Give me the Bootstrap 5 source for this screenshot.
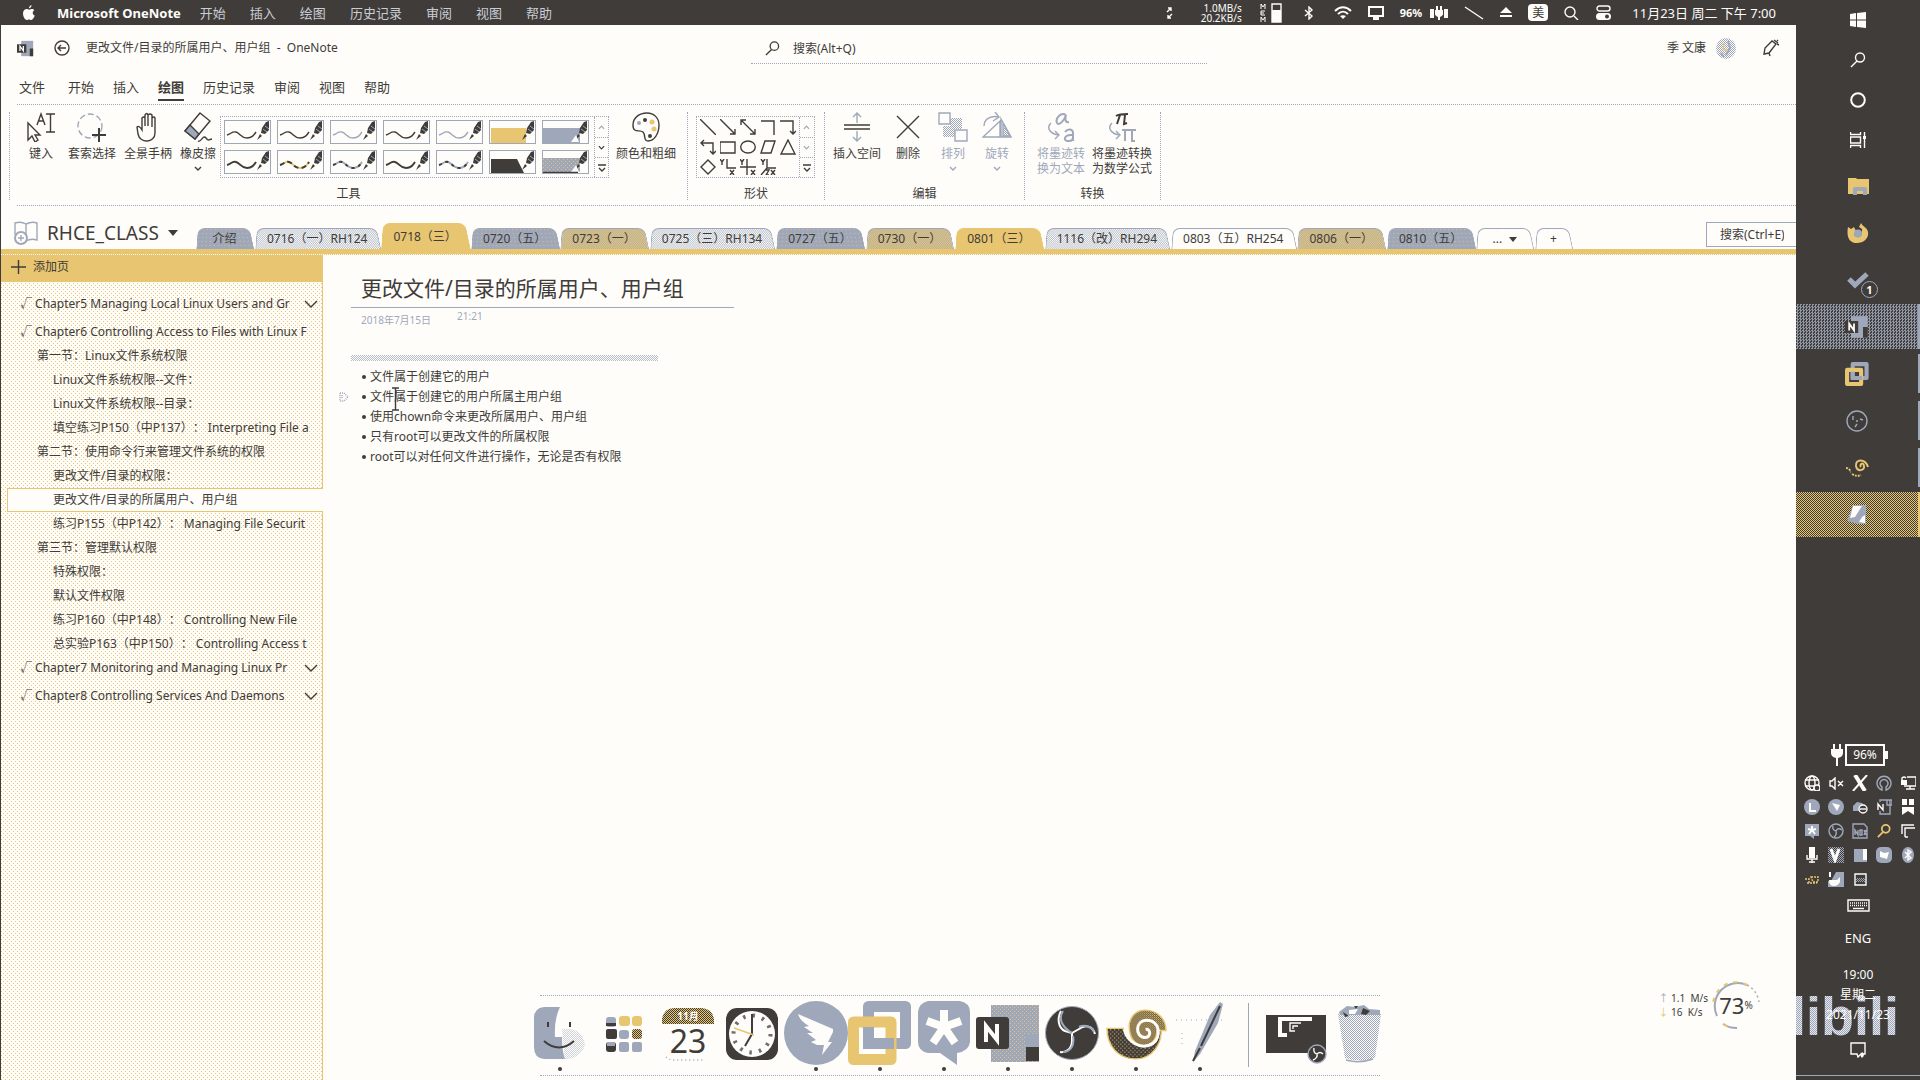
<!DOCTYPE html>
<html lang="zh-CN">
<head>
<meta charset="utf-8">
<meta name="viewport" content="width=device-width, initial-scale=1">
<title>更改文件/目录的所属用户、用户组 - OneNote</title>
<link href="https://cdn.jsdelivr.net/npm/bootstrap@5.3.0/dist/css/bootstrap.min.css" rel="stylesheet">
<style>
:root{--ink:#403c39;--fog:#9fa8ba;--gold:#e8c570;--paper:#fefdfa;
 --checker:repeating-conic-gradient(var(--fog) 0 25%,var(--paper) 0 50%) 0 0/2px 2px;
 --dots4:conic-gradient(from 270deg at 1px 1px,var(--gold) 25%,transparent 0)}
body{font:12px/16px "Noto Sans","Noto Sans CJK SC",sans-serif;text-spacing-trim:space-all;color:var(--ink);background:var(--paper);overflow:hidden}
a{color:inherit;text-decoration:none}
button{background:none;border:0;padding:0;color:inherit;font:inherit}
svg{display:block;flex:none;fill:none;stroke:currentColor;stroke-width:1.4}
.fill{fill:currentColor;stroke:none}
.fog{color:var(--fog)}
.solid-fog{fill:var(--fog);stroke:none}.solid-gold{fill:var(--gold);stroke:none}.solid-ink{fill:var(--ink);stroke:none}.solid-paper{fill:var(--paper);stroke:none}
.window{border-left:1px solid var(--ink)}
.sysbar{height:25px;background:var(--ink);color:var(--paper);padding:0 20px 0 22px;font-size:13px}
.sysbar .menus{margin-left:22px}
.sysbar .menus a{margin-right:24px}
.sysbar .menus a+a{color:#c9cdd5}
.sysbar .menus a:first-child{margin-right:19px}
.rate{font-size:10px;line-height:10px;text-align:right;width:44px}
.netpct{font-size:11px}
.ime{background:var(--paper);color:var(--ink);font-size:12px;line-height:17px}
.titlebar{height:48px;padding:0 16px 2px}
.findbox{width:456px;border-bottom:1px dotted var(--fog);padding-left:14px;height:30px;left:750px;top:9px}
.findbox input{margin-left:13px}
.findbox input,.pagefind input{border:0;background:none;outline:0;color:inherit;font:inherit;padding:0}
input::placeholder{color:var(--ink);opacity:1}
.menutabs{height:31px;padding:0 18px;gap:19px;font-size:13px}
.menutabs a{height:28px;line-height:28px;border-bottom:2px solid transparent}
.menutabs a.on{font-weight:700;border-color:var(--ink)}
.ribbon{height:100px;margin-left:8px}
.rule-dots{border-top:1px dotted var(--fog);margin-left:16px;height:0}
.grp{border-right:1px dotted var(--fog);margin:7px 0;height:88px}
.grp.first{border-left:1px dotted var(--fog)}
.grp .tools{height:74px;display:flex}
.grp .cap{text-align:center;line-height:15px}
.tool{display:flex;flex-direction:column;align-items:center;line-height:15px;white-space:nowrap}
.tool svg{margin-bottom:4px}
.tool .drop{margin-top:5px}
.w44{width:44px}.w46{width:46px}.w56{width:56px}.w66{width:66px}
.gallery{border:1px dotted var(--fog);height:62px;margin-top:4px}
.pens{display:grid;grid-template-columns:repeat(7,47px);gap:6px;padding:3px 0 0 3px;width:373px;align-content:start}
.pens button{border:1px solid var(--fog);height:24px}
.thick{stroke-width:2}
.flip{transform:rotate(180deg)}
.strip{width:14px;border-left:1px dotted var(--fog);font-size:9px}
.strip button{height:20px;display:flex;align-items:center;justify-content:center}
.strip button+button{border-top:1px dotted var(--fog)}
.shapes{display:grid;grid-template-columns:repeat(5,20px);grid-auto-rows:20px;padding-left:1px;width:102px}
.shapes button{display:flex;align-items:center;justify-content:center}
.bookrow{height:43px;padding-left:13px}
.book{width:181px}
.bookname{font-size:19px;line-height:24px;margin:0 9px 0 8px}
.sect{position:relative;isolation:isolate;height:21px;line-height:22px;padding:0 13px;white-space:nowrap;text-align:center;min-width:59px}
.sect::before,.sect::after{content:"";position:absolute;z-index:-1;top:0;bottom:0;background:var(--bg);border-top:1px solid var(--fog)}
.sect::before{left:2px;right:50%;border-left:1px solid var(--fog);border-radius:7px 0 0 0;transform:skewX(-4deg)}
.sect::after{left:40%;right:2px;border-right:1px solid var(--fog);border-radius:0 7px 0 0;transform:skewX(12deg)}
.sect{--bg:var(--paper)}
.s-blue{--bg:var(--dots4) 0 0/4px 4px,#9fa8ba}
.s-check{--bg:var(--checker)}
.s-mix{--bg:repeating-conic-gradient(var(--fog) 0 25%,var(--gold) 0 50%) 0 0/2px 2px}
.s-gold{--bg:var(--gold)}
.s-gold::before,.s-gold::after{border-color:var(--gold)}
.sect.on{height:26px;line-height:28px}
.sect.plus{min-width:38px}
.pagefind{width:90px;height:25px;border:1px solid var(--fog);border-right:0;padding-left:13px;margin-bottom:2px}
.goldline{height:6px;background:var(--gold);border-bottom:1px dotted var(--paper)}
.pages{width:322px;background:var(--dots4) 0 0/4px 4px,var(--dots4) 2px 2px/4px 4px,var(--paper);border-right:1px solid var(--gold)}
.addpage{height:27px;background:var(--gold);padding:0 0 4px 10px;gap:6px;text-align:left;display:flex;align-items:center}
.plist{padding-top:10px}
.plist a{height:24px;line-height:24px;white-space:nowrap;overflow:hidden;padding-right:6px}
.plist .l1{padding:0 4px 0 19px}.plist .gap4{margin-bottom:4px}
.plist .l2{padding-left:36px}.plist .l3{padding-left:52px}
.plist .l1 .nm{width:278px;overflow:hidden}
.plist .on{margin-left:6px;padding-left:45px;border:1px solid var(--gold);border-right:0;background:var(--paper);line-height:22px;margin-right:-1px}
.sheet{padding:18px 0 0 28px}
.sheet h1{font-size:21px;line-height:30px;margin:0;padding:0 10px 4px;border-bottom:1px solid var(--fog);width:383px;font-weight:400;white-space:nowrap}
.stamp{font-size:10px;color:var(--fog);padding:0 10px;gap:26px}
.note{width:307px;margin-top:27px}
.handle{height:6px;background:var(--checker);opacity:.75}
.note ul{padding:6px 0 0 19px;margin:0;list-style:none;white-space:nowrap}
.note li{line-height:20px;position:relative}
.note li::before{content:"";position:absolute;left:-8px;top:8px;width:4px;height:4px;border-radius:50%;background:var(--ink)}
.caret{position:absolute;left:22px;top:0}
.gripper{position:absolute;left:-31px;top:5px}
.dock{position:absolute;left:50%;transform:translateX(-50%);bottom:4px;width:864px;height:81px}
.dock .edge{position:absolute;left:12px;right:12px;border-top:1px dotted var(--fog)}
.dock button{width:64px;height:81px;padding-bottom:3px}
.dock .run{padding-bottom:0}
.dock .run::after{content:"";display:block;width:4px;height:4px;border-radius:50%;background:var(--ink);margin:2px auto 0}
.dock .bar{width:1px;height:64px;background:var(--fog);margin:8px 15px 0 16px}
.cal{font-size:10px;font-weight:700;fill:var(--paper);stroke:none}
.calday{font-size:32px;fill:var(--ink);stroke:none}
.netbox{position:absolute;right:160px;bottom:51px;gap:4px;color:var(--ink);font-size:10px;line-height:14px}
.ring{width:48px;height:48px}
.netbox .big{font-size:22px}
.goldtext{color:var(--gold)}
.side{width:124px;background:var(--ink);color:var(--paper);position:relative}
.side .app{display:flex;align-items:center;justify-content:center;height:40px;width:100%;flex:none;position:relative}
.side .tall{height:47px}
.side .firsttall{margin-top:2px}
.side .live{border-right:2px solid var(--fog);height:39px;margin:4px 0}
.side .cur{height:45px;margin:1px 0;background:repeating-conic-gradient(#8f97a6 0 25%,var(--ink) 0 50%) 0 0/3px 3px;border-right:2px solid var(--fog)}
.side .warn{height:45px;margin:1px 0;background:repeating-conic-gradient(var(--gold) 0 25%,var(--ink) 0 50%) 0 0/2px 2px;border-right:2px solid var(--gold)}
.pip{position:absolute;left:65px;top:25px;width:17px;height:17px;border:1px solid var(--fog);border-radius:50%;background:var(--ink);font:700 11px/15px "Noto Sans",sans-serif;text-align:center}
.power{gap:2px}
.cell{border:2px solid var(--paper);width:40px;height:22px;line-height:18px;text-align:center;position:relative}
.cell::after{content:"";position:absolute;right:-5px;top:5px;width:3px;height:8px;background:var(--paper)}
.tray{display:grid;grid-template-columns:repeat(5,24px);grid-auto-rows:24px;margin:5px 0 0 4px}
.tray button{display:flex;align-items:center;justify-content:center}
.keys{height:28px}
.alerts{height:50px}
.baseline{height:1px;background:var(--fog);margin-bottom:4px}
.lang{height:38px;line-height:38px;font-size:13px}
.when{line-height:20px;font-size:12px;text-align:center;position:relative}
.wmark{position:absolute;left:-5px;bottom:34px;font:700 54px/60px "Liberation Sans",sans-serif;color:transparent;background:repeating-conic-gradient(var(--fog) 0 25%,#e5e7ea 0 50%) 0 0/2px 2px;-webkit-background-clip:text;background-clip:text;white-space:nowrap}
.clipside{position:absolute;inset:0;overflow:hidden;pointer-events:none}
</style>
</head>
<body class="d-flex vh-100">
<svg width="0" height="0" class="position-absolute">
 <defs>
 <pattern id="chk" width="2" height="2" patternUnits="userSpaceOnUse"><path fill="#9fa8ba" stroke="none" d="M0 0h1v1H0zM1 1h1v1H1z"/></pattern>
 <pattern id="chkg" width="2" height="2" patternUnits="userSpaceOnUse"><path fill="#e8c570" stroke="none" d="M0 0h2v2H0z"/><path fill="#403c39" stroke="none" d="M0 0h1v1H0zM1 1h1v1H1z"/></pattern>
 <pattern id="speck" width="4" height="4" patternUnits="userSpaceOnUse"><path fill="#9fa8ba" stroke="none" d="M0 0h4v4H0z"/><path fill="#e8c570" stroke="none" d="M0 0h1v1H0zM2 2h1v1H2z"/></pattern>
 <pattern id="inkspeck" width="4" height="4" patternUnits="userSpaceOnUse"><path fill="#403c39" stroke="none" d="M0 0h4v4H0z"/><path fill="#e8c570" stroke="none" d="M0 0h1v1H0zM2 2h1v1H2z"/></pattern>
 </defs>
 <symbol id="nib" viewBox="0 0 45 22"><path fill="#403c39" stroke="none" d="M44 0v9l-4 4-4-1 1-5 4-6zM35 13l2 2-5 4z"/><path stroke="#9fa8ba" stroke-width="1" d="M38 8l4 3M40 5l4 3"/></symbol>
 <symbol id="wave" viewBox="0 0 45 22"><path d="M2 14c4-1 5-4 9-3s5 6 11 6c5 0 7-3 9-6"/></symbol>
 <symbol id="one" viewBox="0 0 20 20"><path class="solid-fog" d="M5 1h14v18H5z"/><path class="solid-ink" d="M15 10h4v9h-4zM0 5h11v10H0z"/><path stroke="#fefdfa" stroke-width="1.5" d="M3.500 13V7.200l4 5.600V7"/></symbol>
 <symbol id="vm" viewBox="0 0 64 64"><path stroke="#9fa8ba" stroke-width="11" stroke-linejoin="round" d="M20.500 5.500h37v37h-37z"/><path stroke="#e8c570" stroke-width="11" stroke-linejoin="round" d="M5.500 21h37.500v37.500H5.500z"/><path stroke="#9fa8ba" stroke-width="11" d="M20.500 26v16.500H46"/></symbol>
 <symbol id="obs" viewBox="0 0 54 54"><circle cx="27" cy="27" r="26.500" fill="#403c39" stroke="#9fa8ba" stroke-width="1"/><path stroke="#fefdfa" stroke-width="2" d="M16 5c-4 7-3 17 4 20l7 2M27 27l7-4c6-5 14-3 16 5M27 27v8c0 7-5 12-12 11"/><path stroke="#9fa8ba" stroke-width="2" d="M18 5c-5 8-1 16 9 22M34 21c6-3 13 0 15 5M28 30c2 10-3 16-10 16"/></symbol>
 <symbol id="snail" viewBox="0 0 60 50"><path fill="url(#inkspeck)" stroke="#e8c570" d="M1 19h16c3 11 18 19 29 11l8-12c2 15-8 31-25 31C12 49 1 36 1 19z"/><path fill="url(#chkg)" stroke="#e8c570" d="M23 14C25 5 32 1 38 1c12 0 21 8 21 20H50c0 9-6 15-13 15-9 0-15-9-14-22z"/><path stroke="#fefdfa" stroke-width="3" d="M18 20c3 12 16 21 28 14 9-7 7-23-6-23-11 0-12 16-2 17 7 0 6-9 1-8"/></symbol>
 <symbol id="chev" viewBox="0 0 8 5"><path d="M1 1l3 3 3-3"/></symbol>
 <symbol id="lens" viewBox="0 0 16 16"><circle cx="10" cy="5.500" r="4.500"/><path d="M7 9l-6 6"/></symbol>
</svg>

<main class="window flex-grow-1 d-flex flex-column position-relative overflow-hidden">
 <header class="sysbar d-flex align-items-center">
  <svg class="fill" width="12" height="15" viewBox="0 0 12 15"><path d="M8.500 0C8.600 1.800 7.400 3.200 6 3.300 5.900 1.700 7.200.3 8.500 0zM11.300 5.200C9 6.600 9.400 9.700 11.800 10.600 11 13 9.600 15 8.300 15c-1 0-1.300-.6-2.300-.6S4.600 15 3.700 15C1.900 15 0 11.500 0 8.600 0 5.500 1.800 4 3.600 4c1.100 0 1.800.7 2.600.7S7.800 4 9 4c.9 0 1.800.5 2.300 1.200z"/></svg>
  <nav class="menus d-flex"><a href="#" class="fw-bold">Microsoft OneNote</a><a href="#">开始</a><a href="#">插入</a><a href="#">绘图</a><a href="#">历史记录</a><a href="#">审阅</a><a href="#">视图</a><a href="#">帮助</a></nav>
  <div class="ms-auto d-flex align-items-center">
   <svg width="8" height="14" viewBox="0 0 8 14" stroke-width="1"><path d="M1 6l4-4M2 2h3v3M6 8l-4 4M5 12H2V9"/></svg>
   <div class="rate ms-4">1.0MB/s<br>20.2KB/s</div>
   <svg class="ms-3" width="26" height="20" viewBox="0 0 26 20"><path stroke-width="1" d="M3 6V1l2 3 2-3v5M7 8H3v4h4M3 10h3M3 19v-5l2 3 2-3v5"/><path d="M14 1h9v18h-9z"/><path class="fill" d="M14 7h9v12h-9z"/></svg>
   <svg class="ms-3" width="18" height="14" viewBox="0 0 18 14"><path d="M5 4l7 6-3 3V1l3 3-7 6"/></svg>
   <svg class="ms-3" width="18" height="13" viewBox="0 0 18 13" stroke-width="2"><path stroke-width="2" d="M1 5c5-5 11-5 16 0M4 8c3-3 7-3 10 0"/><path class="fill" d="M6 10c2-1 4-1 6 0l-3 3z"/></svg>
   <svg class="ms-3" width="16" height="14" viewBox="0 0 16 14"><path stroke-width="2" d="M1 1h14v9H1z"/><path class="fill" d="M5 11h6v3H5z"/></svg>
   <b class="netpct ms-3">96%</b>
   <svg class="ms-2" width="18" height="14" viewBox="0 0 18 14"><path class="fill" d="M0 3h4v9H0zM14 3h4v9h-4zM5 4h8v4c0 2-3 3-3 3v3H8v-3S5 10 5 8zM6 0h2v4H6zM10 0h2v4h-2z"/></svg>
   <svg class="ms-3" width="20" height="14" viewBox="0 0 20 14"><path d="M1 1l18 12"/></svg>
   <svg class="fill ms-3" width="12" height="11" viewBox="0 0 12 11"><path d="M6 0l6 6H0zM0 8h12v2H0z"/></svg>
   <span class="ime px-1 ms-3 rounded-1">美</span>
   <svg class="ms-3" width="16" height="14" viewBox="0 0 16 14"><circle cx="6" cy="6" r="5"/><path d="M10 10l4 4"/></svg>
   <svg class="ms-3 me-3" width="16" height="15" viewBox="0 0 16 15"><rect x="1" y="1" width="13" height="5" rx="2.500"/><rect class="fill" y="8" width="15" height="7" rx="3.500"/><circle class="solid-ink" cx="11" cy="11.500" r="2"/></svg>
   <span class="ps-1">11月23日 周二 下午 7:00</span>
  </div>
 </header>

 <div class="titlebar d-flex align-items-center position-relative">
  <svg width="17" height="17"><use href="#one"/></svg>
  <button class="ms-3 ps-1 me-3" aria-label="返回"><svg width="16" height="16" viewBox="0 0 16 16"><circle cx="8" cy="8" r="7"/><path d="M12 8H4M7 5L4 8l3 3"/></svg></button>
  <span>更改文件/目录的所属用户、用户组 &nbsp;-&nbsp; OneNote</span>
  <label class="findbox position-absolute d-flex align-items-center"><svg width="15" height="15"><use href="#lens"/></svg><input class="flex-grow-1" type="search" placeholder="搜索(Alt+Q)" aria-label="搜索"></label>
  <span class="ms-auto">季 文康</span>
  <svg class="ms-2 me-4" width="24" height="21" viewBox="0 0 20 21"><ellipse cx="10" cy="10.500" rx="10" ry="10.500" fill="url(#chk)" stroke="none"/><path stroke="#e8c570" d="M8 5l-1 6 4 2"/><path stroke="#9fa8ba" stroke-width="2" d="M12 3l2 7-4 7M5 15l3 4"/></svg>
  <button aria-label="墨迹"><svg width="18" height="18" viewBox="0 0 18 18"><path d="M2 15l1-6 7-7 4 3-7 9zM2 15l5-1 1 3M12 1l4 3M15 1l1 1M17 6l-2-1"/></svg></button>
 </div>

 <nav class="menutabs d-flex"><a href="#" class="me-1">文件</a><a href="#">开始</a><a href="#">插入</a><a href="#" class="on">绘图</a><a href="#">历史记录</a><a href="#">审阅</a><a href="#">视图</a><a href="#">帮助</a></nav>
 <div class="rule-dots"></div>

 <section class="ribbon d-flex">
  <div class="grp first" style="width:679px">
   <div class="tools ps-2">
    <button class="tool w46"><svg width="30" height="30" viewBox="0 0 30 30"><path d="M2 11v17l4-4 3 6 3-2-3-5h5zM11 13l4-11 4 11M12 9h6M20 2h9M24.500 2v18M20 20h9"/></svg>键入</button>
    <button class="tool w56"><svg width="30" height="30" viewBox="0 0 30 30"><circle cx="13" cy="14" r="12" stroke="#9fa8ba" stroke-dasharray="6 3"/><path stroke-width="2" d="M15 23h14M22 16v14"/></svg>套索选择</button>
    <button class="tool w56"><svg width="24" height="30" viewBox="0 0 24 30"><path d="M6 18V6q2-2 3 0v8V3q2-3 3 0v11V3q2-2 4 0v12V6q2-2 3 0v15c0 10-15 11-17 1L1 15q2-2 5 3z"/></svg>全景手柄</button>
    <button class="tool w44"><svg width="30" height="30" viewBox="0 0 30 30"><path d="M17 1l10 8L12 27 2 19z"/><path fill="#9fa8ba" d="M7 13l9 9-4 5-10-8z"/><path d="M15 29c3 2 5-7 8-3s3 1 6 1"/></svg>橡皮擦<svg class="drop" width="8" height="5"><use href="#chev"/></svg></button>
    <div class="gallery d-flex">
     <div class="pens">
      <button aria-label="笔 1"><svg width="45" height="22"><use href="#wave"/><use href="#nib"/></svg></button>
      <button aria-label="笔 2"><svg width="45" height="22"><use href="#wave"/><use href="#nib"/></svg></button>
      <button aria-label="笔 3"><svg width="45" height="22"><use href="#wave" class="fog"/><use href="#nib"/></svg></button>
      <button aria-label="笔 4"><svg width="45" height="22"><use href="#wave"/><use href="#nib"/></svg></button>
      <button aria-label="笔 5"><svg width="45" height="22"><use href="#wave" class="fog"/><use href="#nib"/></svg></button>
      <button aria-label="荧光笔 1"><svg width="45" height="22"><path class="solid-gold" d="M1 7h35v15H1z"/><use href="#nib"/></svg></button>
      <button aria-label="荧光笔 2"><svg width="45" height="22"><path class="solid-fog" d="M0 7h37v15H0z"/><use href="#nib"/><path class="solid-paper" d="M28 21l5-7 3 7z"/></svg></button>
      <button aria-label="笔 6"><svg class="thick" width="45" height="22"><use href="#wave"/><use href="#nib"/></svg></button>
      <button aria-label="笔 7"><svg class="thick" width="45" height="22"><use href="#wave" class="goldtext"/><use href="#wave" stroke-dasharray="5 3"/><use href="#nib"/></svg></button>
      <button aria-label="笔 8"><svg class="thick" width="45" height="22"><use href="#wave" class="fog"/><use href="#wave" stroke-dasharray="3 4"/><use href="#nib"/></svg></button>
      <button aria-label="笔 9"><svg class="thick" width="45" height="22"><use href="#wave"/><use href="#nib"/></svg></button>
      <button aria-label="笔 10"><svg class="thick" width="45" height="22"><use href="#wave" class="fog"/><use href="#wave" stroke-dasharray="3 4"/><use href="#nib"/></svg></button>
      <button aria-label="荧光笔 3"><svg width="45" height="22"><path class="solid-ink" d="M1 8h26l7 14H1z"/><use href="#nib"/></svg></button>
      <button aria-label="荧光笔 4"><svg width="45" height="22"><path fill="url(#speck)" stroke="none" d="M0 7h37v14H0z"/><use href="#nib"/><path class="solid-paper" d="M28 21l5-7 3 7z"/><path d="M0 21.500h35"/></svg></button>
     </div>
     <div class="strip d-flex flex-column"><button class="fog" aria-label="上"><svg class="flip" width="7" height="5"><use href="#chev"/></svg></button><button aria-label="下"><svg width="7" height="5"><use href="#chev"/></svg></button><button aria-label="更多"><svg width="8" height="8" viewBox="0 0 8 8"><path d="M0 1h8M1 4l3 3 3-3"/></svg></button></div>
    </div>
    <button class="tool ms-1 w66"><svg width="30" height="30" viewBox="0 0 30 30"><path d="M2 13C2 6 8 1 16 1c7 0 12 5 12 12 0 9-5 16-11 16-5 0-2-6-5-9s-10 2-10-7z"/><circle class="solid-fog" cx="8" cy="11" r="2"/><circle class="solid-ink" cx="14" cy="8" r="2"/><circle class="solid-gold" cx="21" cy="10" r="2.500"/><circle class="solid-gold" cx="23" cy="17" r="2.500"/><circle class="solid-ink" cx="19" cy="24" r="2"/></svg>颜色和粗细</button>
   </div>
   <div class="cap">工具</div>
  </div>
  <div class="grp" style="width:137px">
   <div class="tools ps-2">
    <div class="gallery d-flex" style="width:119px">
     <div class="shapes">
      <button aria-label="直线"><svg width="16" height="16" viewBox="0 0 16 16"><path d="M0 0l16 16"/></svg></button>
      <button aria-label="箭头"><svg width="16" height="16" viewBox="0 0 16 16"><path d="M0 0l15 15M15 10v5h-5"/></svg></button>
      <button aria-label="双箭头"><svg width="16" height="16" viewBox="0 0 16 16"><path d="M1 1l14 14M15 10v5h-5M1 6V1h5"/></svg></button>
      <button aria-label="折线"><svg width="16" height="16" viewBox="0 0 16 16"><path d="M1 2h13v14"/></svg></button>
      <button aria-label="折线箭头"><svg width="16" height="16" viewBox="0 0 16 16"><path d="M0 2h13v13M10 12l3 3 3-3"/></svg></button>
      <button aria-label="双向折线"><svg width="16" height="16" viewBox="0 0 16 16"><path d="M1 4h12v11M10 12l3 3 3-3M4 1L1 4l3 3"/></svg></button>
      <button aria-label="矩形"><svg width="16" height="16" viewBox="0 0 16 16"><path d="M0 3h15v11H0z"/></svg></button>
      <button aria-label="椭圆"><svg width="16" height="16" viewBox="0 0 16 16"><ellipse cx="8" cy="8" rx="7.300" ry="6"/></svg></button>
      <button aria-label="平行四边形"><svg width="16" height="16" viewBox="0 0 16 16"><path d="M5 2h10l-4 12H1z"/></svg></button>
      <button aria-label="三角形"><svg width="16" height="16" viewBox="0 0 16 16"><path d="M8 1l7 14H1z"/></svg></button>
      <button aria-label="菱形"><svg width="16" height="16" viewBox="0 0 16 16"><path d="M8 1l7 7-7 7-7-7z"/></svg></button>
      <button aria-label="坐标 1"><svg width="16" height="16" viewBox="0 0 16 16"><path d="M7 0v9h9M0 0l2 3 2-3M2 3v3M10 11l4 5M14 11l-4 5"/></svg></button>
      <button aria-label="坐标 2"><svg width="16" height="16" viewBox="0 0 16 16"><path d="M7 0v16M0 8h16M0 0l2 3 2-3M2 3v3M11 11l4 5M15 11l-4 5"/></svg></button>
      <button aria-label="坐标 3"><svg width="16" height="16" viewBox="0 0 16 16"><path d="M7 0v9h9M7 9l-6 7M1 0l2 3 2-3M3 3v3M6 11h3l-3 5h3M11 11l4 5M15 11l-4 5"/></svg></button>
     </div>
     <div class="strip d-flex flex-column"><button class="fog" aria-label="上"><svg class="flip" width="7" height="5"><use href="#chev"/></svg></button><button class="fog" aria-label="下"><svg width="7" height="5"><use href="#chev"/></svg></button><button aria-label="更多"><svg width="8" height="8" viewBox="0 0 8 8"><path d="M0 1h8M1 4l3 3 3-3"/></svg></button></div>
    </div>
   </div>
   <div class="cap">形状</div>
  </div>
  <div class="grp" style="width:200px">
   <div class="tools ps-1">
    <button class="tool w56"><svg width="28" height="30" viewBox="0 0 28 30"><path d="M1 13h26M1 17h26"/><path stroke="#9fa8ba" d="M14 11V1M10 5l4-4 4 4M14 19v10M10 25l4 4 4-4"/></svg>插入空间</button>
    <button class="tool w46"><svg width="24" height="30" viewBox="0 0 24 30"><path d="M1 4l22 22M23 4L1 26"/></svg>删除</button>
    <button class="tool fog w44"><svg width="30" height="30" viewBox="0 0 30 30"><path fill="url(#chk)" d="M12 6h12v11H12zM5 14h12v11H5z" stroke="none"/><path fill="#fefdfa" d="M1 1h11v11H1zM17 18h12v11H17z"/></svg>排列<svg class="drop" width="8" height="5"><use href="#chev"/></svg></button>
    <button class="tool fog w44"><svg width="30" height="30" viewBox="0 0 30 30"><path d="M1 25h17V9zM19 7l10 18H19z"/><path fill="url(#chk)" d="M21 11l7 13h-7z"/><path d="M2 14C2 7 9 3 17 5M13 0l4 5-6 4"/></svg>旋转<svg class="drop" width="8" height="5"><use href="#chev"/></svg></button>
   </div>
   <div class="cap">编辑</div>
  </div>
  <div class="grp" style="width:136px">
   <div class="tools ps-2">
    <button class="tool fog w56"><svg width="30" height="30" viewBox="0 0 30 30"><path stroke-width="2" d="M20 3c-5-3-11 3-9 8 2 3 7-2 9-8-1 4-1 8 3 7M19 20c3-4 8-3 8 1v8M27 23c-10-1-10 7-4 6 3 0 4-2 4-4"/><path d="M5 11c-5 5-1 11 8 12M9 19l4 4-4 4"/></svg>将墨迹转<br>换为文本</button>
    <button class="tool w66"><svg width="30" height="30" viewBox="0 0 30 30"><path stroke-width="2" d="M9 4q3-2 12-2M13 3l-3 9M18 3l-1 9 3-1"/><path stroke="#9fa8ba" stroke-width="2" d="M15 18h14M18 18v11M25 18v11h3"/><path stroke="#9fa8ba" d="M5 11c-5 5-1 11 8 12M9 19l4 4-4 4"/></svg>将墨迹转换<br>为数学公式</button>
   </div>
   <div class="cap">转换</div>
  </div>
 </section>
 <div class="rule-dots"></div>

 <div class="bookrow d-flex align-items-end">
  <div class="book d-flex align-items-center mb-1">
   <svg width="25" height="24" viewBox="0 0 25 24" stroke="#9fa8ba" class="fog"><path d="M1 13V2q6-2 11 1 6-3 11-1v17q-6-2-11 1zM12 3v17"/><circle cx="7" cy="17" r="6" fill="#fefdfa" stroke-width="2"/><path d="M4 17h6M7 14v6"/></svg>
   <span class="bookname">RHCE_CLASS</span>
   <svg class="fill" width="10" height="6" viewBox="0 0 10 6"><path d="M0 0h10L5 6z"/></svg>
  </div>
  <nav class="d-flex align-items-end">
   <a href="#" class="sect s-blue">介绍</a><a href="#" class="sect s-check">0716（一）RH124</a><a href="#" class="sect s-gold on">0718（三）</a><a href="#" class="sect s-blue">0720（五）</a><a href="#" class="sect s-mix">0723（一）</a><a href="#" class="sect s-check">0725（三）RH134</a><a href="#" class="sect s-blue">0727（五）</a><a href="#" class="sect s-mix">0730（一）</a><a href="#" class="sect s-gold">0801（三）</a><a href="#" class="sect s-check">1116（改）RH294</a><a href="#" class="sect">0803（五）RH254</a><a href="#" class="sect s-mix">0806（一）</a><a href="#" class="sect s-blue">0810（五）</a><a href="#" class="sect">... <svg class="fill d-inline-block ms-1" width="8" height="5" viewBox="0 0 8 5"><path d="M0 0h8L4 5z"/></svg></a><a href="#" class="sect plus">+</a>
  </nav>
  <label class="pagefind ms-auto d-flex align-items-center"><input class="w-100" type="search" placeholder="搜索(Ctrl+E)" aria-label="搜索页面"></label>
 </div>
 <div class="goldline"></div>

 <div class="flex-grow-1 d-flex">
  <aside class="pages">
   <button class="addpage w-100"><svg width="16" height="16" viewBox="0 0 16 16"><path d="M0 8h15M7.500 1v14"/></svg>添加页</button>
   <nav class="plist d-flex flex-column">
    <a href="#" class="l1 gap4 d-flex align-items-center justify-content-between"><span class="nm">√ Chapter5 Managing Local Linux Users and Gr</span><svg width="14" height="8" viewBox="0 0 14 8"><path d="M1 1l6 6 6-6"/></svg></a>
    <a href="#" class="l1">√ Chapter6 Controlling Access to Files with Linux F</a>
    <a href="#" class="l2">第一节：Linux文件系统权限</a>
    <a href="#" class="l3">Linux文件系统权限--文件：</a>
    <a href="#" class="l3">Linux文件系统权限--目录：</a>
    <a href="#" class="l3">填空练习P150（中P137）： Interpreting File a</a>
    <a href="#" class="l2">第二节：使用命令行来管理文件系统的权限</a>
    <a href="#" class="l3">更改文件/目录的权限：</a>
    <a href="#" class="l3 on">更改文件/目录的所属用户、用户组</a>
    <a href="#" class="l3">练习P155（中P142）： Managing File Securit</a>
    <a href="#" class="l2">第三节：管理默认权限</a>
    <a href="#" class="l3">特殊权限：</a>
    <a href="#" class="l3">默认文件权限</a>
    <a href="#" class="l3">练习P160（中P148）： Controlling New File</a>
    <a href="#" class="l3">总实验P163（中P150）： Controlling Access t</a>
    <a href="#" class="l1 gap4 d-flex align-items-center justify-content-between"><span class="nm">√ Chapter7 Monitoring and Managing Linux Pr</span><svg width="14" height="8" viewBox="0 0 14 8"><path d="M1 1l6 6 6-6"/></svg></a>
    <a href="#" class="l1 d-flex align-items-center justify-content-between"><span class="nm">√ Chapter8 Controlling Services And Daemons</span><svg width="14" height="8" viewBox="0 0 14 8"><path d="M1 1l6 6 6-6"/></svg></a>
   </nav>
  </aside>
  <article class="sheet flex-grow-1">
   <h1>更改文件/目录的所属用户、用户组</h1>
   <div class="stamp d-flex"><span class="pt-1">2018年7月15日</span><span>21:21</span></div>
   <div class="note">
    <div class="handle"></div>
    <ul>
     <li>文件属于创建它的用户</li>
     <li>文件属于创建它的用户所属主用户组
      <svg class="caret" width="7" height="24" viewBox="0 0 7 24"><path d="M0 1h7M3.500 1v22M0 23h7"/></svg>
      <svg class="gripper" width="10" height="10" viewBox="0 0 10 10"><path stroke="#9fa8ba" stroke-dasharray="1 1" d="M1 1h4l4 4-4 4H1zM3 3v4"/></svg></li>
     <li>使用chown命令来更改所属用户、用户组</li>
     <li>只有root可以更改文件的所属权限</li>
     <li>root可以对任何文件进行操作，无论是否有权限</li>
    </ul>
   </div>
  </article>
 </div>
</main>

<aside class="side flex-shrink-0 d-flex flex-column align-items-center">
 <div class="clipside"><span class="wmark" aria-hidden="true">libili</span></div>
 <button class="app" aria-label="开始"><svg class="fill" width="16" height="16" viewBox="0 0 16 16"><path d="M0 2l6-1v6.500H0zM7 1l9-1v7.500H7zM0 8.500h6V15l-6-1zM7 8.500h9V16l-9-1z"/></svg></button>
 <button class="app" aria-label="搜索"><svg width="16" height="16"><use href="#lens"/></svg></button>
 <button class="app" aria-label="Cortana"><svg width="16" height="16" viewBox="0 0 16 16"><circle cx="8" cy="8" r="6.800" stroke-width="2"/></svg></button>
 <button class="app" aria-label="任务视图"><svg width="16" height="16" viewBox="0 0 16 16"><path d="M.5 0v2.500h10V0M.5 5h10v6H.5zM.5 16v-2.500h10V16M14.500 0v16"/><path class="fill" d="M13 4h3v3h-3z"/></svg></button>
 <button class="app tall firsttall" aria-label="文件资源管理器"><svg width="21" height="18" viewBox="0 0 21 18"><path class="solid-gold" d="M0 1h8l1 1h12v15H0z"/><path class="solid-fog" d="M5 18v-6q0-2 2-2h10q2 0 2 2v6h-4v-4H9v4z"/></svg></button>
 <button class="app tall" aria-label="Firefox"><svg width="22" height="20" viewBox="0 0 22 20"><path class="solid-gold" d="M1 4l3 2 3-2 2 4-2 4q5 5 8-1V6l-3-2 2-4c2 4 6 4 7 9 1 6-4 11-11 11S-1 15 1 4z"/><circle class="solid-fog" cx="11" cy="10.500" r="4"/></svg></button>
 <button class="app tall" aria-label="待办"><svg width="22" height="18" viewBox="0 0 22 18"><path d="M2 8l6 6L20 3" stroke="#9fa8ba" stroke-width="5"/></svg><span class="pip">1</span></button>
 <button class="app cur" aria-label="OneNote"><svg width="24" height="24"><use href="#one"/></svg></button>
 <button class="app live" aria-label="VMware"><svg width="24" height="24"><use href="#vm"/></svg></button>
 <button class="app live" aria-label="OBS"><svg width="22" height="22" viewBox="0 0 22 22"><circle cx="11" cy="11" r="10" stroke="#9fa8ba"/><path stroke="#9fa8ba" d="M7 6v4M14 9l3 1M11 14l-2 3M10 11h2"/></svg></button>
 <button class="app live" aria-label="录屏"><svg width="24" height="18" viewBox="0 0 24 18"><path stroke="#e8c570" stroke-width="2" d="M23 8C20-1 10 0 11 7c1 6 9 5 8 0s-5-1-3 1"/><path stroke="#e8c570" stroke-dasharray="2 1" stroke-width="2" d="M1 9c3 0 5 3 4 4M7 15q5 3 9 1"/></svg></button>
 <button class="app warn" aria-label="记事本"><svg width="22" height="22" viewBox="0 0 22 22"><path class="solid-fog" d="M7 1h13v19H12L1 17z"/><path class="solid-paper" d="M7 2h9l-7 11-5 1zM16 13l3-2v8l-6-1z"/></svg></button>

 <div class="power mt-auto d-flex align-items-center">
  <svg class="fill" width="12" height="22" viewBox="0 0 12 22"><path d="M2 0h2v5h4V0h2v5h2v4q0 4-5 5v8H5v-8q-5-1-5-5V5h2z"/></svg><span class="cell">96%</span>
 </div>
 <div class="tray">
  <button aria-label="网络"><svg width="16" height="16" viewBox="0 0 16 16"><circle cx="8" cy="8" r="7"/><ellipse cx="8" cy="8" rx="3" ry="7"/><path d="M1 5h14M1 11h9"/><circle cx="13" cy="13" r="3" fill="#403c39"/></svg></button>
  <button aria-label="静音"><svg width="15" height="13" viewBox="0 0 15 13"><path d="M1 4h2l3-3v11L3 9H1zM9 4l5 5M14 4L9 9"/></svg></button>
  <button aria-label="X"><svg width="16" height="16" viewBox="0 0 16 16"><path stroke-width="4" d="M3 0l10 16"/><path stroke-width="2" d="M15 0L1 16"/></svg></button>
  <button class="fog" aria-label="同步"><svg width="16" height="16" viewBox="0 0 16 16"><path d="M6 15a7 7 0 1 1 4 0v-3a4 4 0 1 0-4 0z"/></svg></button>
  <button aria-label="远程"><svg width="16" height="16" viewBox="0 0 16 16"><path d="M7 2h9v9H4M10 11v3M6 14h9M2 6V3q2-2 4 0"/><path class="fill" d="M1 5h6v5H1z"/></svg></button>
  <button aria-label="L"><svg width="16" height="16" viewBox="0 0 16 16"><circle class="solid-fog" cx="8" cy="8" r="8"/><path stroke-width="2" d="M6 4v8h6"/></svg></button>
  <button aria-label="钉钉"><svg width="16" height="16" viewBox="0 0 16 16"><circle class="solid-fog" cx="8" cy="8" r="8"/><path class="fill" d="M4 4l8 2-3 6z"/></svg></button>
  <button aria-label="云"><svg width="16" height="14" viewBox="0 0 16 14"><path class="solid-fog" d="M1 11V6l4-4 5 1 3 3v5z"/><circle cx="11" cy="9" r="4" fill="#403c39"/><path d="M8 9h6"/></svg></button>
  <button aria-label="OneNote"><svg width="16" height="16" viewBox="0 0 16 16"><path class="fog" d="M4 3V1h10v14H4v-3M11 1h5v5h-5z"/><path d="M2 11V5l5 6V5"/></svg></button>
  <button aria-label="书签"><svg class="fill" width="12" height="16" viewBox="0 0 12 16"><path d="M0 0h5v6H0zM7 0h5v6H7zM0 8h12v8l-6-4-6 4z"/></svg></button>
  <button aria-label="消息"><svg width="16" height="16" viewBox="0 0 16 16"><path class="solid-fog" d="M1 1h14v12h-5v3l-4-3H1z"/><path stroke-width="2" d="M8 3v4l-4-1M8 7l4-1M8 7l-3 4M8 7l3 4"/></svg></button>
  <button class="fog" aria-label="OBS"><svg width="16" height="16" viewBox="0 0 16 16"><circle cx="8" cy="8" r="7"/><path d="M5 3q-1 4 3 5 2-4 6-1M8 8q1 4-2 6"/></svg></button>
  <button class="fog" aria-label="NOX"><svg width="16" height="16" viewBox="0 0 16 16"><path d="M1 1h11l3 3v11H1zM3 12V7l3 5V7M8 7h2v5H8zM12 7l2 5M14 7l-2 5"/></svg></button>
  <button class="goldtext" aria-label="查找"><svg width="14" height="14" viewBox="0 0 16 16" class="thick"><use href="#lens"/></svg></button>
  <button aria-label="窗口"><svg width="14" height="14" viewBox="0 0 14 14"><path d="M1 10V1h12M4 13V4h10M4 13h3"/></svg></button>
  <button aria-label="麦克风"><svg width="12" height="16" viewBox="0 0 12 16"><path class="fill" d="M3 0h6v11H3z"/><path d="M1 8v4h10V8M6 12v4M3 15h6"/></svg></button>
  <button aria-label="V"><svg width="16" height="16" viewBox="0 0 16 16"><path fill="url(#chk)" stroke="none" d="M0 0h16v16H0z"/><path stroke-width="3" d="M3 2l4 11 4-11"/></svg></button>
  <button aria-label="文档"><svg width="13" height="13" viewBox="0 0 13 13"><path class="solid-fog" d="M0 0h13v13H0z"/><path class="fill" d="M9 0h4v11H9z"/></svg></button>
  <button aria-label="绘图"><svg width="16" height="16" viewBox="0 0 16 16"><rect class="solid-fog" width="16" height="16" rx="5"/><path class="fill" d="M4 4l4 2 5-1-2 7-7-2z"/></svg></button>
  <button aria-label="蓝牙"><svg width="12" height="16" viewBox="0 0 12 16"><ellipse class="solid-fog" cx="6" cy="8" rx="6" ry="8"/><path d="M3 5l6 6-3 2V3l3 2-6 6"/></svg></button>
  <button aria-label="录屏"><svg width="14" height="9" viewBox="0 0 14 9"><path stroke="#e8c570" stroke-dasharray="2 1" d="M0 4h4v4M6 2h7v5H8zM2 8h10"/></svg></button>
  <button aria-label="咖啡"><svg width="16" height="15" viewBox="0 0 16 15"><path class="solid-fog" d="M8 0h8v15H0V9h3z"/><path class="fill" d="M1 8h8l3-3v5q-2 4-6 4-5 0-5-6zM1 0h2v5H1z"/></svg></button>
  <button aria-label="触摸板"><svg width="13" height="13" viewBox="0 0 13 13"><path d="M1 1h11v11H1z"/><path fill="url(#chk)" stroke="none" d="M2 5h9v4H2z"/></svg></button>
 </div>
 <button aria-label="键盘" class="keys d-flex align-items-center"><svg width="23" height="13" viewBox="0 0 23 13"><path d="M1 1h21v11H1z"/><path stroke-dasharray="1 1" d="M3 4h17M3 6.500h17"/><path d="M6 9.500h11"/></svg></button>
 <div class="lang">ENG</div>
 <div class="when mt-2">19:00<br>星期二<br>2021/11/23</div>
 <button aria-label="通知" class="alerts d-flex align-items-center"><svg width="16" height="16" viewBox="0 0 16 16"><path d="M1 1h14v11h-4l-3 3-1-3H1z"/><path class="fill" d="M12 10q4 2 0 6-3-3 0-6z"/></svg></button>
 <div class="baseline w-100"></div>
</aside>

<div class="netbox d-flex align-items-center">
 <div><span class="fog">↑</span> 1.1 &nbsp;M/s<br><span class="goldtext">↓</span> 16 &nbsp;K/s</div>
 <div class="ring d-flex align-items-center justify-content-center position-relative"><svg class="position-absolute" width="48" height="48" viewBox="0 0 48 48"><path stroke="#9fa8ba" stroke-width="2" d="M35 4A23 23 0 0 0 5 35M11 43Q17 47 25 47"/><path stroke="#9fa8ba" stroke-dasharray="2 3" d="M35 4Q45 9 47 21"/><path stroke="#e8c570" stroke-width="2" stroke-dasharray="4 6" d="M35 4A23 23 0 0 0 1 24M12 43q5 4 9 4"/></svg><span class="big">73</span><span>%</span></div>
</div>

<nav class="dock d-flex">
 <div class="edge top-0"></div><div class="edge bottom-0"></div>
 <button class="run" aria-label="访达"><svg width="64" height="64" viewBox="0 0 64 64"><path fill="url(#chk)" stroke="none" opacity=".5" d="M34 28q20-2 23 16-5 14-20 14z"/><path class="solid-fog" d="M16 6h16q-6 12-5 30h7q0 14 3 22H16Q6 57 6 46V17Q6 7 16 6z"/><path stroke-width="2" d="M20 21v5M42 21v5M16 40q15 13 30 0"/></svg></button>
 <button aria-label="启动台"><svg width="64" height="64" viewBox="0 0 64 64"><rect class="solid-fog" x="14" y="15" width="10" height="10" rx="3"/><path class="solid-ink" d="M14 21h10v3H14z"/><rect class="solid-gold" x="27" y="14" width="11" height="10" rx="3"/><rect class="solid-gold" x="40" y="14" width="10" height="10" rx="3"/><rect class="solid-ink" x="14" y="27" width="11" height="10" rx="2"/><rect class="solid-fog" x="27" y="28" width="10" height="9" rx="3"/><rect fill="url(#chkg)" stroke="none" x="40" y="27" width="10" height="10" rx="3"/><rect class="solid-ink" x="14" y="40" width="10" height="10" rx="3"/><path class="solid-fog" d="M15 40h8v4h-8z"/><rect class="solid-fog" x="27" y="40" width="10" height="10" rx="2"/><rect class="solid-fog" x="40" y="40" width="10" height="10" rx="2"/></svg></button>
 <button aria-label="日历"><svg width="64" height="64" viewBox="0 0 64 64"><path fill="url(#chkg)" stroke="none" d="M6 22V17Q8 6 18 6h28q11 1 12 12v4z"/><text class="cal" x="32" y="18" text-anchor="middle">11月</text><text class="calday" x="32" y="51" text-anchor="middle">23</text><path stroke="#9fa8ba" stroke-dasharray="1 3" d="M10 55q3 3 8 3h30"/></svg></button>
 <button aria-label="时钟"><svg width="64" height="64" viewBox="0 0 64 64"><rect class="solid-ink" x="6" y="6" width="52" height="52" rx="11"/><circle class="solid-paper" cx="32" cy="32" r="23"/><circle cx="32" cy="32" r="18.500" stroke-width="4" stroke="#6e6d70" stroke-dasharray="2.500 7.190"/><path stroke-width="2" d="M32 12v20l-7 12"/><path stroke="#e8c570" d="M14 26l20 7"/></svg></button>
 <button class="run" aria-label="钉钉"><svg width="64" height="64" viewBox="0 0 64 64"><circle class="solid-fog" cx="32" cy="32" r="32"/><path class="solid-paper" d="M14 13l35 15v3l-5 10h4L38 54l2-10h-7l-6-3 5-2-9-7h6l-9-6 5-1Q16 20 14 13z"/></svg></button>
 <button class="run" aria-label="VMware"><svg width="64" height="64"><use href="#vm"/></svg></button>
 <button class="run" aria-label="消息"><svg width="64" height="64" viewBox="0 0 64 64"><path class="solid-fog" d="M16 0h32q10 2 10 11v30q-1 9-13 11v12L28 52H16Q6 50 6 41V11Q7 2 16 0z"/><path stroke="#fefdfa" stroke-width="8" d="M32 9v17L15 20M32 26l17-6M32 26L21 42M32 26l11 16"/></svg></button>
 <button class="run" aria-label="OneNote"><svg width="64" height="64" viewBox="0 0 64 64"><path fill="url(#speck)" stroke="none" d="M15 4h48v57H15z"/><path fill="url(#chk)" stroke="none" d="M50 33h13v13H50z"/><path class="solid-ink" d="M50 46h13v14H50z"/><rect class="solid-ink" y="16" width="33" height="32" rx="3"/><path stroke="#fefdfa" stroke-width="4" d="M10 41V25l11 14V23"/></svg></button>
 <button class="run" aria-label="OBS"><svg width="64" height="64" viewBox="0 0 64 64"><use href="#obs" x="5" y="5" width="54" height="54"/></svg></button>
 <button class="run" aria-label="录屏"><svg width="64" height="64" viewBox="0 0 64 64"><use href="#snail" x="2" y="8" width="61" height="51"/></svg></button>
 <button class="run" aria-label="笔"><svg width="64" height="64" viewBox="0 0 64 64"><path class="solid-fog" d="M52 1l3 2-5 19-18 31-7 8 2-11L42 14z"/><path stroke-width="2" d="M52 5L33 45M32 47l-7 13"/><path stroke="#9fa8ba" stroke-width="1" stroke-dasharray="1 4" d="M8 19h46M14 32v14"/></svg></button>
 <div class="bar"></div>
 <button aria-label="窗口"><svg width="64" height="64" viewBox="0 0 64 64"><path class="solid-ink" d="M2 13h60v38H2z"/><path stroke="#fefdfa" stroke-width="4" d="M48 17H16v16h7"/><path stroke="#fefdfa" d="M37 21H26v8h5M34 24h-5v3"/><circle cx="53" cy="52" r="9" fill="#403c39" stroke="#9fa8ba"/><path stroke="#fefdfa" d="M50 46q-1 5 3 6 3-3 6 0M53 52q1 4-4 6"/></svg></button>
 <button aria-label="废纸篓"><svg width="64" height="64" viewBox="0 0 64 64"><path fill="url(#chk)" stroke="none" d="M10 12h43l-6 44q-15 5-30 0z"/><path class="solid-fog" d="M11 10l8-6 8 1 9-2 5 4 11 1v5H12z"/><path class="solid-ink" d="M15 10l6 4-4 1zM35 6l7 3-4 4-5-1zM26 4h4l-2 3z"/><path class="solid-paper" d="M21 8l9-1-3 5h-6z"/><path stroke="#9fa8ba" d="M18 58q13 4 27-1"/></svg></button>
</nav>
<script src="https://cdn.jsdelivr.net/npm/bootstrap@5.3.0/dist/js/bootstrap.bundle.min.js"></script>
</body>
</html>
